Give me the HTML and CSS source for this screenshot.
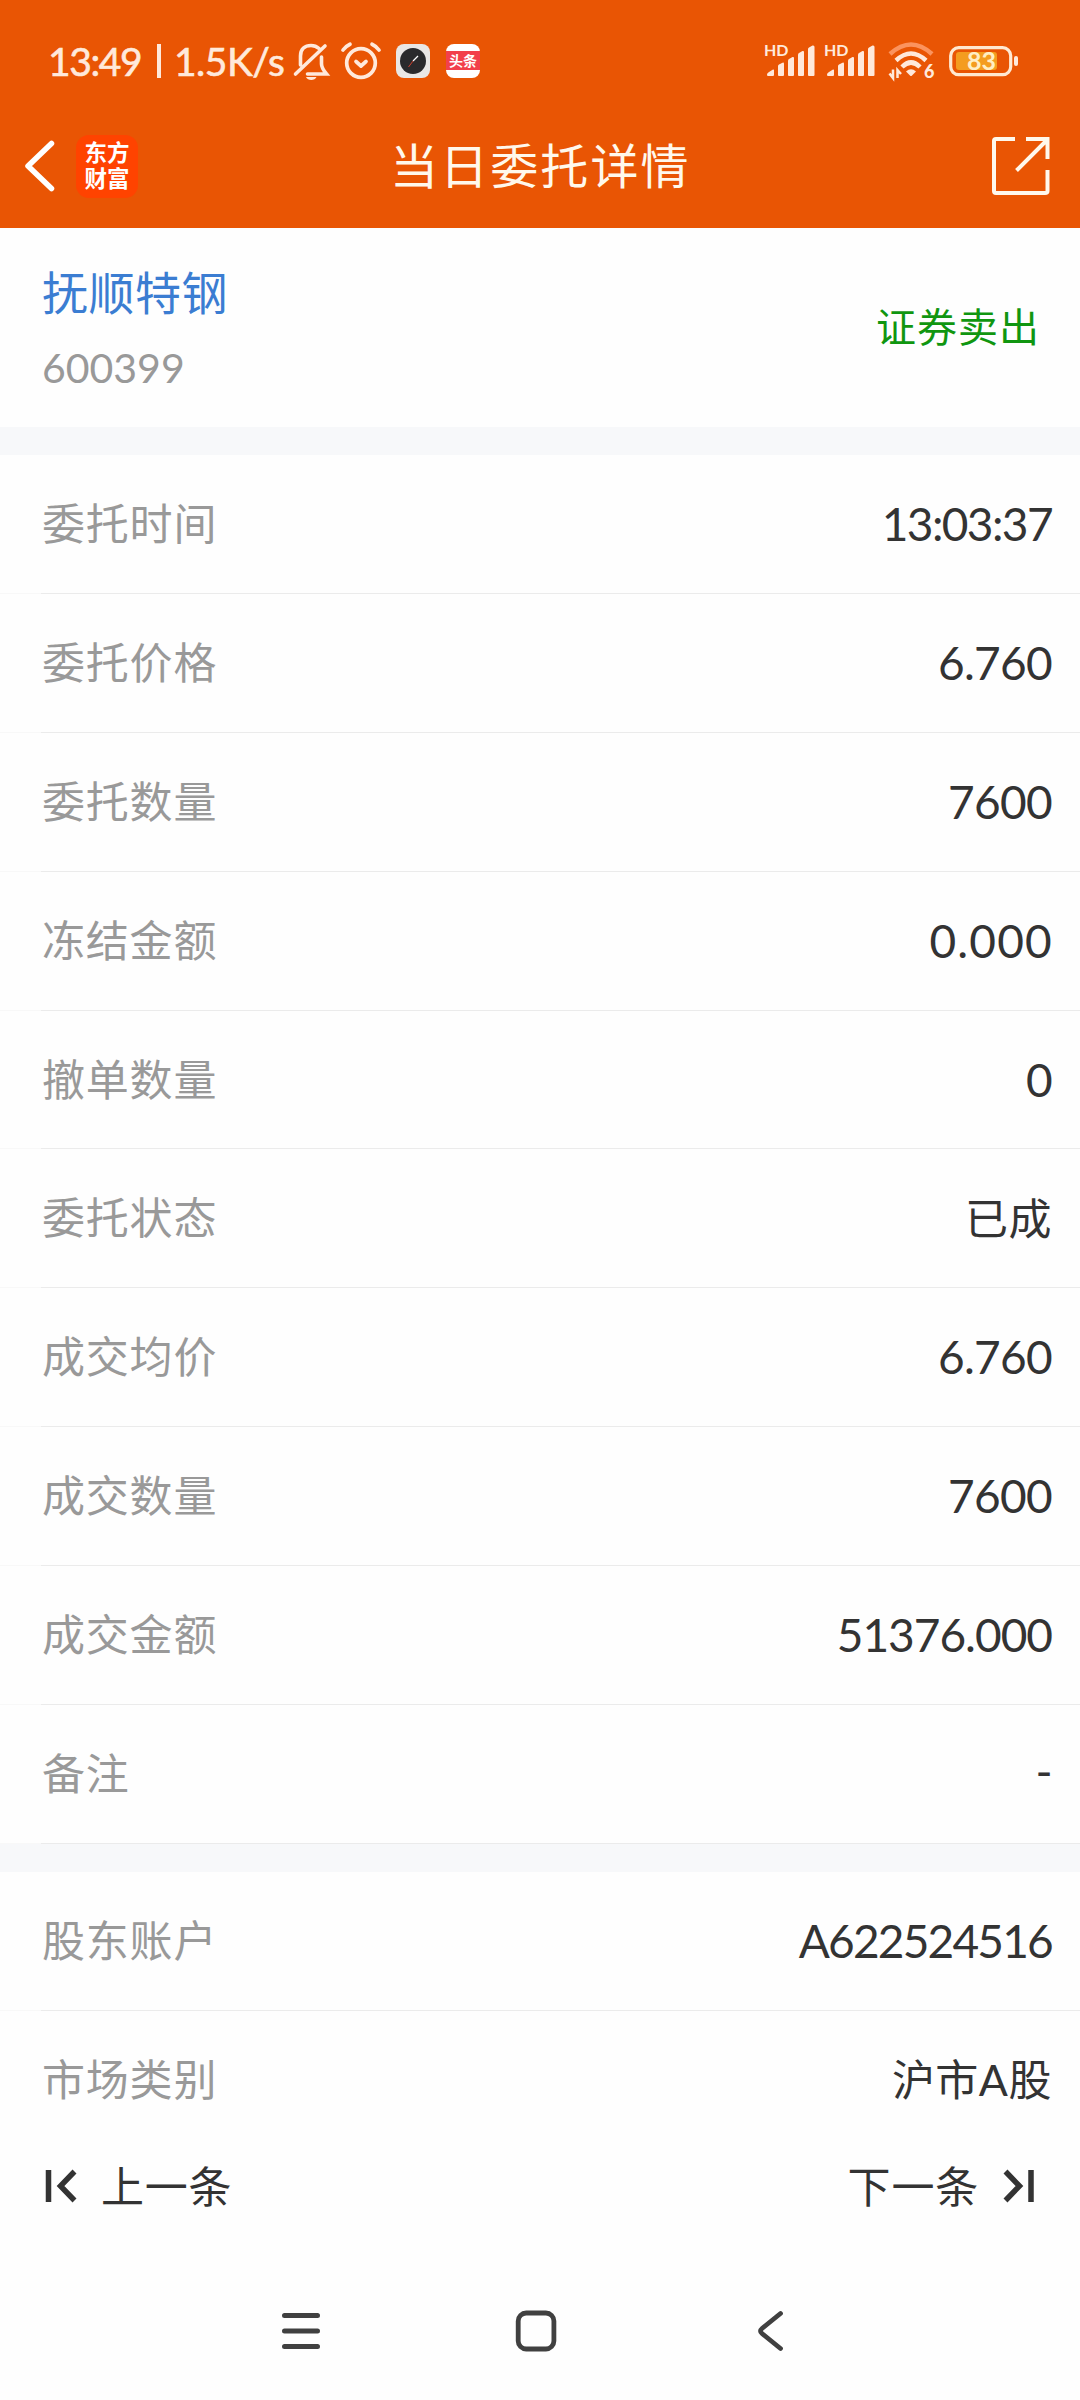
FILE: index.html
```html
<!DOCTYPE html>
<html lang="zh-CN">
<head>
<meta charset="utf-8">
<title>当日委托详情</title>
<link rel="stylesheet" href="styles.css">
</head>
<body>
<header class="top">
  <div class="status">
    <span class="clock">13:49</span><span class="sep"></span><span class="speed">1.5K/s</span>
    <svg class="bell" width="36" height="38" viewBox="0 0 36 38" fill="none" stroke="#ffe9db" stroke-width="3.6" stroke-linecap="round">
      <path d="M7.5 22V13C7.500 6 12 2.500 18 2.500C21 2.500 24 3.700 26 5.500M2.500 31L32 3M28.500 14V21C28.500 25 31 28 33.500 31H14.500"/>
      <path d="M13 34H23.500C22 38 14.500 38 13 34Z" fill="#ffe9db" stroke="none"/>
    </svg>
    <svg class="alarm" width="40" height="38" viewBox="0 0 40 38" fill="none" stroke="#ffe9db" stroke-width="3.700" stroke-linecap="round" stroke-linejoin="round">
      <circle cx="20" cy="21" r="14.300"/><path d="M15 19.500L20 24L25 19.500M2 8Q5 4 9 2.200M38 8Q35 4 31 2.200"/>
    </svg>
    <svg class="app" width="34" height="34" viewBox="0 0 34 34">
      <rect width="34" height="34" rx="8" fill="#e9e7e5"/><circle cx="17" cy="17" r="13" fill="#2a2a2c"/>
      <path d="M17 17L22 12" stroke="#fff" stroke-width="1.300"/><path d="M17 17L12.500 23" stroke="#d0402c" stroke-width="1"/>
    </svg>
    <span class="news"><b>头条</b></span>
    <svg class="signal" width="50" height="34" viewBox="0 0 50 34" fill="#ffe9db">
      <text x="-1" y="12" class="hd">HD</text>
      <path d="M3 32Q2 32 2 30.500Q2 29 4 28L8 25.500Q9 25 9 26.500V31Q9 32 8 32ZM13 22Q13 21 14 20.500L17.500 18.800Q19 18 19 20V31Q19 32 18 32H14Q13 32 13 31ZM23 17Q23 15.500 24 15L27.500 13Q29 12.500 29 14V31Q29 32 28 32H24Q23 32 23 31ZM33 11Q33 9.500 34 9L37.500 7Q39 6.500 39 8V31Q39 32 38 32H34Q33 32 33 31ZM43 5Q43 4 44 3.500L47.500 1.500Q49.500 1 49.500 3V31Q49.500 32 48.500 32H44Q43 32 43 31Z"/>
    </svg>
    <svg class="signal" width="50" height="34" viewBox="0 0 50 34" fill="#ffe9db">
      <text x="-1" y="12" class="hd">HD</text>
      <path d="M3 32Q2 32 2 30.500Q2 29 4 28L8 25.500Q9 25 9 26.500V31Q9 32 8 32ZM13 22Q13 21 14 20.500L17.500 18.800Q19 18 19 20V31Q19 32 18 32H14Q13 32 13 31ZM23 17Q23 15.500 24 15L27.500 13Q29 12.500 29 14V31Q29 32 28 32H24Q23 32 23 31ZM33 11Q33 9.500 34 9L37.500 7Q39 6.500 39 8V31Q39 32 38 32H34Q33 32 33 31ZM43 5Q43 4 44 3.500L47.500 1.500Q49.500 1 49.500 3V31Q49.500 32 48.500 32H44Q43 32 43 31Z"/>
    </svg>
    <svg class="wifi" width="48" height="38" viewBox="0 0 48 38" fill="none" stroke="#ffe9db" stroke-width="4.500">
      <path d="M2 12Q23 -7 44 12" stroke="#fb935e"/><path d="M8 18.500Q23 4.500 38 18.500M14 25Q23 16 32 25"/>
      <path d="M18 29.500Q23 25 28 29.500L24 33.500Q23 34.500 22 33.500Z" fill="#ffe9db" stroke="none"/>
      <path d="M5 27.500V36L1.500 31.500M9.500 36V28L13 32" stroke-width="2.500"/>
      <text x="36" y="36" class="six">6</text>
    </svg>
    <svg class="battery" width="70" height="32" viewBox="0 0 70 32">
      <rect x="1.700" y="2.700" width="60" height="27" rx="8" fill="none" stroke="#ffe9d2" stroke-width="3.200"/>
      <rect x="7" y="7" width="41" height="18" rx="3" fill="#f49c1f"/><rect x="65" y="11" width="4" height="10" rx="2" fill="#ffe9db"/>
      <text x="18" y="25" class="pct">83</text>
    </svg>
  </div>
  <div class="nav">
    <svg class="back" width="34" height="54" viewBox="0 0 34 54" fill="none" stroke="#fff" stroke-width="5.500" stroke-linecap="round"><path d="M26.500 4.500L3 27L26.500 49.500" stroke-linejoin="round"/></svg>
    <div class="logo"><span>东方</span><span>财富</span></div>
    <h1 class="title">当日委托详情</h1>
    <svg class="share" width="60" height="60" viewBox="0 0 60 60" fill="none" stroke="#fff8ec" stroke-width="4"><path d="M24 3H5Q3 3 3 5V55Q3 57 5 57H54Q56.500 57 56.500 55V34M35 3H56.500V23M25.500 34.500L56 4"/></svg>
  </div>
</header>
<section class="stock">
  <div><div class="name">抚顺特钢</div><div class="code">600399</div></div>
  <div class="side">证券卖出</div>
</section>
<main>
  <section class="rows">
    <div class="row"><span>委托时间</span><b class="time">13:03:37</b></div>
    <div class="row"><span>委托价格</span><b>6.760</b></div>
    <div class="row"><span>委托数量</span><b>7600</b></div>
    <div class="row"><span>冻结金额</span><b class="zeros">0.000</b></div>
    <div class="row"><span>撤单数量</span><b>0</b></div>
    <div class="row"><span>委托状态</span><b class="cn">已成</b></div>
    <div class="row"><span>成交均价</span><b>6.760</b></div>
    <div class="row"><span>成交数量</span><b>7600</b></div>
    <div class="row"><span>成交金额</span><b class="amount">51376.000</b></div>
    <div class="row"><span>备注</span><b class="dash">-</b></div>
  </section>
  <section class="rows account">
    <div class="row"><span>股东账户</span><b class="holder">A622524516</b></div>
    <div class="row last"><span>市场类别</span><b class="cn">沪市A股</b></div>
  </section>
</main>
<div class="pager">
  <div class="step"><svg width="32" height="34" viewBox="0 0 32 34" fill="none" stroke="#333" stroke-width="5.500"><path d="M3.500 1V33M29.500 2.500L15.500 17L29.500 31.500"/></svg><span>上一条</span></div>
  <div class="step"><span>下一条</span><svg width="32" height="34" viewBox="0 0 32 34" fill="none" stroke="#333" stroke-width="5.500"><path d="M28 1V33M2.500 2.500L16.500 17L2.500 31.500"/></svg></div>
</div>
<footer class="keys">
  <svg width="42" height="42" viewBox="0 0 42 42" stroke="#404040" stroke-width="5" stroke-linecap="round"><path d="M4.500 5.500H37.500M4.500 21H37.500M4.500 36.500H37.500"/></svg>
  <svg width="42" height="42" viewBox="0 0 42 42" fill="none" stroke="#404040" stroke-width="4.800"><rect x="3.200" y="3" width="35.700" height="36" rx="8"/></svg>
  <svg width="42" height="42" viewBox="0 0 42 42" fill="none" stroke="#404040" stroke-width="4.800" stroke-linecap="round"><path d="M30.500 3.500L12 18.500Q9 21 12 23.500L30.500 38.500"/></svg>
</footer>
</body>
</html>
```
FILE: styles.css
```css
* { box-sizing: border-box; }
body {
  margin: 0;
  width: 1080px;
  height: 2400px;
  overflow: hidden;
  display: flex;
  flex-direction: column;
  background: #fefefe;
  color: #333;
  font-family: Lato, "Noto Sans CJK SC", sans-serif;
}
svg { display: block; flex: none; overflow: visible; }
.top { height: 228px; background: #e95504; color: #fff8ec; }
.status {
  height: 104px;
  padding: 18px 0 0 48px;
  display: flex;
  align-items: center;
  font-size: 39px;
  color: #ffe9db;
}
.clock, .speed { -webkit-text-stroke: 0.6px #ffe9db; white-space: nowrap; line-height: 40px; }
.clock { width: 109px; letter-spacing: -1.400px; }
.sep { width: 4px; height: 34px; background: #ffe9db; }
.speed { width: 132px; padding-left: 13px; letter-spacing: -0.500px; }
.bell { margin-top: 1px; }
.alarm { margin-left: 12px; }
.app { margin-left: 15px; }
.news {
  width: 34px;
  height: 34px;
  margin-left: 16px;
  border-radius: 8px;
  background: linear-gradient(#fff 7px, #f2404b 7px 26px, #fff 26px);
  display: flex;
  align-items: center;
  justify-content: center;
}
.news b { font-size: 14px; line-height: 18px; font-weight: 700; color: #fff; }
.signal { margin-left: 10px; }
.news + .signal { margin-left: 285px; }
.hd { font-size: 16px; font-weight: 700; }
.wifi { margin-left: 13px; }
.six { font-size: 18px; font-weight: 900; fill: #ffe9db; stroke: none; }
.battery { margin-left: 13px; }
.pct { font-size: 25px; font-weight: 700; fill: #ffeec4; }
.nav {
  height: 124px;
  display: grid;
  grid-template-columns: 51px 62px 1fr 60px;
  align-items: center;
  padding: 0 29px 0 25px;
}
.back { margin-top: -1px; }
.logo {
  width: 62px;
  height: 63px;
  border-radius: 13px;
  background: #ff4300;
  color: #fff;
  font-size: 22.500px;
  font-weight: 700;
  line-height: 26px;
  display: flex;
  flex-direction: column;
  align-items: center;
  justify-content: center;
}
.title {
  margin: 0;
  padding-left: 252px;
  font-size: 48px;
  line-height: 60px;
  font-weight: 400;
  letter-spacing: 2.100px;
}
.stock {
  height: 199px;
  padding: 34px 40px 0 42px;
  display: flex;
  justify-content: space-between;
}
.name { font-size: 46px; line-height: 62px; color: #3b7dd2; letter-spacing: 0.500px; }
.code { font-size: 41px; line-height: 50px; margin-top: 19px; color: #999; letter-spacing: 0; }
.side { font-size: 40px; line-height: 60px; margin-top: 35px; color: #109610; letter-spacing: 1px; }
.rows { border-top: 28px solid #f7f8fa; }
.row {
  height: 138.900px;
  padding: 0 28px 2px 42px;
  display: flex;
  align-items: center;
  justify-content: space-between;
  background: linear-gradient(to right, #f8f8f8 41px, #ebebeb 41px) bottom / 100% 1px no-repeat;
}
.row span { margin-bottom: 5px; font-size: 43px; color: #999; letter-spacing: 0.800px; }
.row b { font-size: 46px; font-weight: 400; letter-spacing: -0.700px; }
.row .time { letter-spacing: -1.600px; }
.row .zeros { letter-spacing: 1.200px; margin-right: -1px; }
.row .amount { letter-spacing: -1px; }
.row .holder { letter-spacing: -1.800px; }
.row .dash { margin-bottom: 6px; }
.row .cn { font-size: 43px; margin-bottom: 4px; letter-spacing: 0.500px; }
.last { background: none; }
.pager {
  height: 73px;
  padding: 0 45px;
  display: flex;
  align-items: center;
  justify-content: space-between;
  font-size: 43px;
}
.step { display: flex; align-items: center; gap: 24px; letter-spacing: 0.800px; }
.step span { margin-bottom: 5px; }
.keys {
  margin-top: auto;
  height: 138px;
  padding: 0 288px 0 280px;
  display: flex;
  align-items: center;
  justify-content: space-between;
}
```
